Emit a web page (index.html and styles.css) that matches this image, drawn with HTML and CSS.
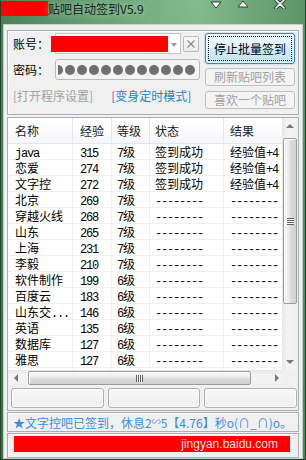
FILE: index.html
```html
<!DOCTYPE html>
<html lang="zh">
<head>
<meta charset="utf-8">
<title>贴吧自动签到V5.9</title>
<link rel="stylesheet" href="styles.css">
</head>
<body>
<div class="window">
  <div class="titlebar">
    <div class="redact title-redact"></div>
    <span class="title">贴吧自动签到V5.9</span>
    <div class="caption">
      <svg class="cap cap-min" width="12" height="10" viewBox="0 0 12 10"><polygon points="1,2 11,2 6,8" fill="#fff" stroke="#2b3d31" stroke-width="1" stroke-linejoin="round"/></svg>
      <svg class="cap cap-max" width="12" height="10" viewBox="0 0 12 10"><polygon points="1,8 11,8 6,2" fill="#fff" stroke="#2b3d31" stroke-width="1" stroke-linejoin="round"/></svg>
      <svg class="cap cap-close" width="12" height="10" viewBox="0 0 12 10"><path d="M2 1 L10 9 M10 1 L2 9" stroke="#2b3d31" stroke-width="3.4" stroke-linecap="round"/><path d="M2 1 L10 9 M10 1 L2 9" stroke="#fff" stroke-width="1.6" stroke-linecap="round"/></svg>
    </div>
  </div>
  <div class="client">
    <div class="group g-top">
      <div class="left">
        <div class="row r1">
          <span class="lbl">账号：</span>
          <div class="combo"><div class="redact combo-redact"></div><span class="combo-arrow"></span></div>
          <div class="xbtn"><svg width="10" height="10" viewBox="0 0 10 10"><path d="M1.5 1.5 L8.5 8.5 M8.5 1.5 L1.5 8.5" stroke="#8a8a8a" stroke-width="1.2"/></svg></div>
        </div>
        <div class="row r2">
          <span class="lbl">密码：</span>
          <div class="pwd"><div class="pwd-clip"><div class="dots"><i></i><i></i><i></i><i></i><i></i><i></i><i></i><i></i><i></i><i></i><i></i><i></i></div></div></div>
        </div>
        <div class="row r3">
          <span class="link gray">[打开程序设置]</span>
          <span class="link blue">[变身定时模式]</span>
        </div>
      </div>
      <div class="right">
        <div class="btn primary">停止批量签到</div>
        <div class="btn disabled b2">刷新贴吧列表</div>
        <div class="btn disabled b3">喜欢一个贴吧</div>
      </div>
    </div>

    <div class="group g-list">
      <div class="listview">
        <div class="table">
          <div class="tr head"><div>名称</div><div>经验</div><div>等级</div><div>状态</div><div>结果</div></div>
          <div class="tr"><div><span class="m">java</span></div><div><span class="m">315</span></div><div><span class="m">7</span>级</div><div>签到成功</div><div>经验值<span class="m">+4</span></div></div>
          <div class="tr"><div>恋爱</div><div><span class="m">274</span></div><div><span class="m">7</span>级</div><div>签到成功</div><div>经验值<span class="m">+4</span></div></div>
          <div class="tr"><div>文字控</div><div><span class="m">272</span></div><div><span class="m">7</span>级</div><div>签到成功</div><div>经验值<span class="m">+4</span></div></div>
          <div class="tr"><div>北京</div><div><span class="m">269</span></div><div><span class="m">7</span>级</div><div><span class="m">--------</span></div><div><span class="m">--------</span></div></div>
          <div class="tr"><div>穿越火线</div><div><span class="m">268</span></div><div><span class="m">7</span>级</div><div><span class="m">--------</span></div><div><span class="m">--------</span></div></div>
          <div class="tr"><div>山东</div><div><span class="m">265</span></div><div><span class="m">7</span>级</div><div><span class="m">--------</span></div><div><span class="m">--------</span></div></div>
          <div class="tr"><div>上海</div><div><span class="m">231</span></div><div><span class="m">7</span>级</div><div><span class="m">--------</span></div><div><span class="m">--------</span></div></div>
          <div class="tr"><div>李毅</div><div><span class="m">210</span></div><div><span class="m">7</span>级</div><div><span class="m">--------</span></div><div><span class="m">--------</span></div></div>
          <div class="tr"><div>软件制作</div><div><span class="m">199</span></div><div><span class="m">6</span>级</div><div><span class="m">--------</span></div><div><span class="m">--------</span></div></div>
          <div class="tr"><div>百度云</div><div><span class="m">183</span></div><div><span class="m">6</span>级</div><div><span class="m">--------</span></div><div><span class="m">--------</span></div></div>
          <div class="tr"><div>山东交<span class="m">...</span></div><div><span class="m">146</span></div><div><span class="m">6</span>级</div><div><span class="m">--------</span></div><div><span class="m">--------</span></div></div>
          <div class="tr"><div>英语</div><div><span class="m">135</span></div><div><span class="m">6</span>级</div><div><span class="m">--------</span></div><div><span class="m">--------</span></div></div>
          <div class="tr"><div>数据库</div><div><span class="m">127</span></div><div><span class="m">6</span>级</div><div><span class="m">--------</span></div><div><span class="m">--------</span></div></div>
          <div class="tr"><div>雅思</div><div><span class="m">127</span></div><div><span class="m">6</span>级</div><div><span class="m">--------</span></div><div><span class="m">--------</span></div></div>
        </div>
        <div class="vscroll">
          <div class="sb-btn"><span class="tri up"></span></div>
          <div class="vtrack"><div class="vthumb"><span class="grip-h"></span></div></div>
          <div class="sb-btn"><span class="tri down"></span></div>
        </div>
        <div class="hscroll">
          <div class="sb-btn"><span class="tri left"></span></div>
          <div class="htrack"><div class="hthumb"><span class="grip-v"></span></div></div>
          <div class="sb-btn"><span class="tri right"></span></div>
        </div>
        <div class="corner"></div>
      </div>
      <div class="btnrow">
        <div class="btn plain"></div>
        <div class="btn plain"></div>
        <div class="btn plain"></div>
      </div>
    </div>

    <div class="group g-status">★文字控吧已签到，休息2<span class="sm">∽</span>5【4.76】秒o(∩_∩)o。</div>

    <div class="group g-bottom">
      <div class="redact bottom-redact"><span class="wm">jingyan.baidu.com</span></div>
    </div>
  </div>
</div>
</body>
</html>
```

FILE: styles.css
```css
* { box-sizing: border-box; margin: 0; padding: 0; }

html, body {
  width: 306px;
  height: 460px;
  overflow: hidden;
}

body {
  font-family: "Noto Sans CJK SC", "Noto Sans", sans-serif;
  font-size: 12px;
  color: #000;
}

.window {
  width: 306px;
  height: 460px;
  display: flex;
  flex-direction: column;
  background:
    linear-gradient(180deg, rgba(255,255,255,0.08), rgba(0,0,0,0.04)),
    linear-gradient(90deg, #3d774b 0%, #579565 25%, #6eab7b 50%, #78b384 65%, #5f9d6c 85%, #4f8b5c 100%);
  box-shadow: inset 1px 0 #22432b, inset -1px 0 #22432b, inset 0 -1px #22432b;
}

.redact { background: #ff0000; }

/* title bar */
.titlebar {
  height: 24px;
  flex: none;
  display: flex;
  align-items: flex-start;
}
.title-redact {
  width: 47px;
  height: 15px;
  margin: 1px 0 0 1px;
}
.title {
  margin-top: 1px;
  font-size: 12px;
  line-height: 16px;
  color: #101c14;
  text-shadow: 0 0 6px rgba(255,255,255,0.55);
}
.caption {
  margin-left: auto;
  padding-right: 20px;
  display: flex;
  align-items: flex-start;
}
.cap { display: block; }
.cap-min { margin-top: 0; }
.cap-max { margin-left: 15px; margin-top: -1px; }
.cap-close { margin-left: 25px; margin-top: -1px; }

/* client */
.client {
  flex: none;
  height: 435px;
  margin: 0 3px;
  background: #f0f0f0;
  border: 1px solid #c3d2c7;
  padding: 5px 3px 0 3px;
  display: flex;
  flex-direction: column;
}

.group {
  border: 1px solid #a9aeb2;
  box-shadow: inset 1px 1px #fbfbfb;
  flex: none;
}

/* top group */
.g-top {
  height: 85px;
  display: flex;
  padding: 2px 0 0 5px;
}
.left { width: 187px; }
.right {
  width: 90px;
  margin-left: 5px;
  display: flex;
  flex-direction: column;
}
.row { display: flex; align-items: center; }
.r1 { height: 21px; }
.r2 { height: 21px; margin-top: 5px; }
.r3 { height: 16px; margin-top: 8px; line-height: 16px; }
.lbl {
  width: 42px;
  flex: none;
  font-size: 12px;
  line-height: 16px;
}
.combo {
  width: 126px;
  height: 21px;
  border: 1px solid #c4c4c4;
  background: #fff;
  display: flex;
  align-items: center;
}
.combo-redact {
  width: 117px;
  height: 16px;
  margin-left: -5px;
}
.combo-arrow {
  margin-left: auto;
  margin-right: 3px;
  width: 0;
  height: 0;
  border-left: 3px solid transparent;
  border-right: 3px solid transparent;
  border-top: 4px solid #9a9a9a;
  margin-top: 2px;
}
.xbtn {
  width: 16px;
  height: 16px;
  margin-left: 2px;
  border: 1px solid #b9b9b9;
  border-radius: 2px;
  background: linear-gradient(#f8f8f8, #ececec);
  display: flex;
  align-items: center;
  justify-content: center;
}
.xbtn svg { display: block; }
.pwd {
  width: 145px;
  height: 21px;
  border: 1px solid #b8b8b8;
  border-radius: 3px;
  background: #f4f4f4;
  padding-left: 2px;
  display: flex;
  align-items: center;
}
.pwd-clip {
  overflow: hidden;
  width: 138px;
  height: 12px;
}
.dots {
  display: flex;
  gap: 2px;
  margin-left: -5px;
  margin-top: 1px;
}
.dots i {
  flex: none;
  width: 10px;
  height: 10px;
  border-radius: 50%;
  background: #6f6f6f;
}
.link { font-size: 12px; }
.gray { color: #a2a2a2; }
.blue { color: #1d86c6; margin-left: 18px; }

.btn {
  display: flex;
  align-items: center;
  justify-content: center;
  border-radius: 3px;
  font-size: 12px;
  line-height: 16px;
}
.primary {
  position: relative;
  height: 31px;
  border: 1px solid #3c7fb1;
  background: linear-gradient(#eef8fe 0%, #ddf1fc 48%, #cdeafa 52%, #c3e5f8 100%);
  box-shadow: inset 0 0 0 1px rgba(255,255,255,0.7), 0 0 2px rgba(60,150,220,0.5);
  color: #000;
}
.primary::after {
  content: "";
  position: absolute;
  inset: 2px;
  border: 1px dotted #1a1a1a;
  border-radius: 1px;
}
.disabled {
  height: 18px;
  border: 1px solid #bcc0c3;
  background: #f4f4f4;
  color: #a0a0a0;
}
.b2 { margin-top: 4px; }
.b3 { margin-top: 5px; }

/* list group */
.g-list {
  height: 294px;
  margin-top: 2px;
  display: flex;
  flex-direction: column;
  padding-bottom: 2px;
  box-shadow: none;
}
.listview {
  display: grid;
  grid-template-columns: 274px 16px;
  grid-template-rows: 252px 16px;
  background: #fff;
}
.table {
  overflow: hidden;
  font-size: 12px;
}
.tr {
  display: grid;
  grid-template-columns: 65px 39px 38px 74px 80px;
  height: 16px;
  line-height: 15px;
  border-bottom: 1px solid #f0f0f0;
  white-space: nowrap;
}
.tr > div {
  border-right: 1px solid #f0f0f0;
}
.tr > div:nth-child(1) { padding-left: 7px; }
.tr > div:nth-child(2) { padding-left: 7px; }
.tr > div:nth-child(3) { padding-left: 5px; }
.tr > div:nth-child(4) { padding-left: 5px; }
.tr > div:nth-child(5) { padding-left: 6px; }
.tr.head {
  height: 26px;
  line-height: 25px;
  background: linear-gradient(#ffffff, #fbfbfc 60%, #f4f5f7);
  border-bottom: 1px solid #e3e6ea;
  color: #1b1b1b;
}
.tr.head > div { border-right: 1px solid #e4e6ea; }
.m {
  font-family: "Liberation Mono", monospace;
  font-size: 12px;
  letter-spacing: -1.2px;
}

/* scrollbars */
.vscroll {
  display: grid;
  grid-template-rows: 16px 1fr 16px;
  background: linear-gradient(90deg, #e6e6e6, #f3f3f3 30%, #f0f0f0);
}
.hscroll {
  display: grid;
  grid-template-columns: 16px 1fr 16px;
  background: linear-gradient(180deg, #e6e6e6, #f3f3f3 30%, #f0f0f0);
}
.corner { background: #f0f0f0; }
.sb-btn {
  display: flex;
  align-items: center;
  justify-content: center;
}
.tri { width: 0; height: 0; }
.tri.up { border-left: 4px solid transparent; border-right: 4px solid transparent; border-bottom: 4px solid #777; }
.tri.down { border-left: 4px solid transparent; border-right: 4px solid transparent; border-top: 4px solid #777; }
.tri.left { border-top: 4px solid transparent; border-bottom: 4px solid transparent; border-right: 4px solid #777; }
.tri.right { border-top: 4px solid transparent; border-bottom: 4px solid transparent; border-left: 4px solid #777; }
.vtrack { padding: 4px 1px 0 1px; }
.vthumb {
  height: 166px;
  border: 1px solid #9b9b9b;
  border-radius: 2px;
  background: linear-gradient(90deg, #f6f6f6, #ededed 40%, #dcdcdc 55%, #d2d2d2);
  box-shadow: inset 1px 1px #fff;
  display: flex;
  align-items: center;
  justify-content: center;
}
.grip-h {
  width: 7px;
  height: 7px;
  background: repeating-linear-gradient(180deg, #5f5f5f 0 1px, #f8f8f8 1px 2px);
}
.htrack { padding: 1px 0 1px 4px; }
.hthumb {
  width: 223px;
  height: 14px;
  border: 1px solid #9b9b9b;
  border-radius: 2px;
  background: linear-gradient(180deg, #f6f6f6, #ededed 40%, #dcdcdc 55%, #d2d2d2);
  box-shadow: inset 1px 1px #fff;
  display: flex;
  align-items: center;
  justify-content: center;
}
.grip-v {
  width: 7px;
  height: 7px;
  background: repeating-linear-gradient(90deg, #5f5f5f 0 1px, #f8f8f8 1px 2px);
}

.btnrow {
  display: grid;
  grid-template-columns: 1fr 1fr 1fr;
  gap: 4px;
  height: 20px;
  margin-top: 2px;
  padding: 0 1px 0 3px;
}
.plain {
  border: 1px solid #afafaf;
  background: linear-gradient(#f7f7f7, #efefef);
  box-shadow: inset 0 0 0 1px #fcfcfc;
}

/* status */
.g-status {
  height: 20px;
  margin-top: 1px;
  padding-left: 5px;
  font-size: 12px;
  line-height: 18px;
  color: #3a8ce4;
  white-space: nowrap;
}
.sm { font-size: 9px; vertical-align: 3px; }

.g-bottom {
  height: 25px;
  margin-top: 1px;
  padding: 2px 0 0 6px;
}
.bottom-redact {
  width: 276px;
  height: 16px;
  display: flex;
  justify-content: flex-end;
  align-items: center;
  padding-right: 12px;
}
.wm {
  font-family: "Liberation Sans", Arial, sans-serif;
  font-size: 12px;
  color: #ffdede;
}
```
